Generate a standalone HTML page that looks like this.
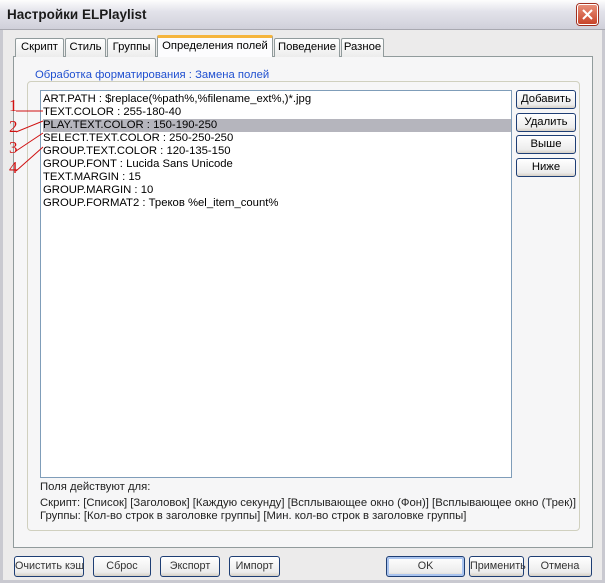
<!DOCTYPE html>
<html><head><meta charset="utf-8"><style>
*{margin:0;padding:0;box-sizing:border-box}
body{width:605px;height:583px;overflow:hidden;background:#ecebeb;font-family:"Liberation Sans",sans-serif;font-size:11.3px;color:#000;position:relative}
.a{position:absolute;white-space:nowrap}
.win{left:0;top:0;width:605px;height:583px;border:1px solid #8a8a94;border-left:3px solid #c9c9d0;border-right:3px solid #c9c9d0;border-bottom:3px solid #c9c9d0}
.title{left:0;top:0;width:605px;height:30px;background:linear-gradient(#fdfdfd,#e2e2ea 40%,#d0d0da);border-bottom:1px solid #a8a8b0}
.title span{position:absolute;left:7px;top:7px;font-weight:bold;font-size:13.5px;color:#1a1a1a}
.close{left:577px;top:4px;width:21px;height:21px;border-radius:3px;background:linear-gradient(#e8907a,#c8442a);border:1px solid #fff;box-shadow:0 0 0 1px #a03020}
.tab{top:38px;height:19px;border:1px solid #919b9c;border-bottom:none;background:linear-gradient(#fff,#ececec);border-radius:2px 2px 0 0;text-align:center;line-height:17px}
.tab.on{top:35px;height:22px;background:#fcfcfe;border-top:3px solid #f5b53d;z-index:2}
.panel{left:13px;top:56px;width:580px;height:492px;border:1px solid #919b9c;background:#f6f6f7}
.gb{left:27px;top:81px;width:553px;height:450px;border:1px solid #d0d0bf;border-radius:4px}
.gl{left:32px;top:69px;background:#f6f6f7;padding:0 3px;color:#2050d0}
.list{left:40px;top:90px;width:472px;height:388px;background:#fff;border:1px solid #7f9db9}
.row{position:absolute;left:2px;height:13px;line-height:13px;width:468px;white-space:nowrap}
.sel{background:#b5b5bd}
.btn{height:19px;border:1px solid #1e3e74;border-radius:3px;background:linear-gradient(#ffffff,#ececec 80%,#d6d0c5);text-align:center;line-height:17px}
.bb{top:556px;height:21px;line-height:19px;font-size:10.8px;color:#333}
.num{font-family:"Liberation Serif",serif;color:#d01010;font-size:17px}
.t{color:#222}
</style></head><body>
<div class="a win"></div>
<div class="a title"><span>Настройки ELPlaylist</span></div>
<div class="a close"><svg width="19" height="19"><path d="M5 5L14 14M14 5L5 14" stroke="#fff" stroke-width="2"/></svg></div>
<div class="a panel"></div>
<div class="a tab" style="left:15px;width:49px">Скрипт</div>
<div class="a tab" style="left:65px;width:41px">Стиль</div>
<div class="a tab" style="left:107px;width:49px">Группы</div>
<div class="a tab on" style="left:157px;width:116px;line-height:16px">Определения полей</div>
<div class="a tab" style="left:274px;width:66px">Поведение</div>
<div class="a tab" style="left:341px;width:43px">Разное</div>
<div class="a gb"></div>
<div class="a gl">Обработка форматирования : Замена полей</div>
<div class="a list">
<div class="row" style="top:2px">ART.PATH : $replace(%path%,%filename_ext%,)*.jpg</div>
<div class="row" style="top:15px">TEXT.COLOR : 255-180-40</div>
<div class="row sel" style="top:28px">PLAY.TEXT.COLOR : 150-190-250</div>
<div class="row" style="top:41px">SELECT.TEXT.COLOR : 250-250-250</div>
<div class="row" style="top:54px">GROUP.TEXT.COLOR : 120-135-150</div>
<div class="row" style="top:67px">GROUP.FONT : Lucida Sans Unicode</div>
<div class="row" style="top:80px">TEXT.MARGIN : 15</div>
<div class="row" style="top:93px">GROUP.MARGIN : 10</div>
<div class="row" style="top:106px">GROUP.FORMAT2 : Треков %el_item_count%</div>
</div>
<svg class="a" style="left:0;top:90px" width="50" height="100">
<path d="M16 21H43M16 42L43 31M16 61L43 43M16 81L43 57" stroke="#d01010" stroke-width="1" fill="none"/>
</svg>
<div class="a num" style="left:9px;top:96px">1</div>
<div class="a num" style="left:9px;top:117px">2</div>
<div class="a num" style="left:9px;top:138px">3</div>
<div class="a num" style="left:9px;top:158px">4</div>
<div class="a btn" style="left:516px;top:90px;width:60px">Добавить</div>
<div class="a btn" style="left:516px;top:113px;width:60px">Удалить</div>
<div class="a btn" style="left:516px;top:135px;width:60px">Выше</div>
<div class="a btn" style="left:516px;top:158px;width:60px">Ниже</div>
<div class="a t" style="left:40px;top:481px">Поля действуют для:</div>
<div class="a t" style="left:40px;top:497px">Скрипт: [Список] [Заголовок] [Каждую секунду] [Всплывающее окно (Фон)] [Всплывающее окно (Трек)]</div>
<div class="a t" style="left:40px;top:510px">Группы: [Кол-во строк в заголовке группы] [Мин. кол-во строк в заголовке группы]</div>
<div class="a btn bb" style="left:14px;width:70px">Очистить кэш</div>
<div class="a btn bb" style="left:93px;width:58px">Сброс</div>
<div class="a btn bb" style="left:160px;width:60px">Экспорт</div>
<div class="a btn bb" style="left:229px;width:51px">Импорт</div>
<div class="a btn bb" style="left:386px;width:79px;box-shadow:inset 0 0 0 2px #aac4ef">OK</div>
<div class="a btn bb" style="left:469px;width:55px">Применить</div>
<div class="a btn bb" style="left:528px;width:64px">Отмена</div>
</body></html>
